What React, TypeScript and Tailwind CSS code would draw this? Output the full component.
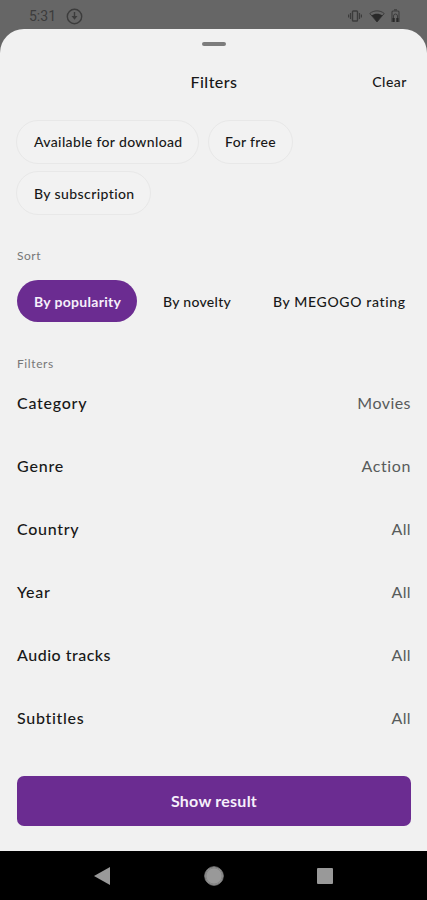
import React from "react";

const filters = [
  { name: "Category", value: "Movies", nameTracking: "tracking-[0.75px]", valueTracking: "tracking-[0.45px]" },
  { name: "Genre", value: "Action", nameTracking: "tracking-[0.8px]", valueTracking: "tracking-[0.6px]" },
  { name: "Country", value: "All", nameTracking: "tracking-[0.7px]", valueTracking: "tracking-[0.4px]" },
  { name: "Year", value: "All", nameTracking: "tracking-[0.7px]", valueTracking: "tracking-[0.4px]" },
  { name: "Audio tracks", value: "All", nameTracking: "tracking-[0.5px]", valueTracking: "tracking-[0.4px]" },
  { name: "Subtitles", value: "All", nameTracking: "tracking-[0.7px]", valueTracking: "tracking-[0.4px]" },
];

function StatusBar() {
  return (
    <header className="flex h-8 items-center justify-between pl-[29px] pr-[26px] text-[#3c3c3c]">
      <div className="flex items-center gap-[10px]">
        <span className="font-['Roboto',sans-serif] text-[14px] leading-4 font-normal">5:31</span>
        <svg width="17" height="17" viewBox="0 0 17 17" fill="none" stroke="currentColor" strokeWidth="1.4">
          <circle cx="8.5" cy="8.5" r="7.2" />
          <path d="M8.5 4v5" />
          <path d="M5.5 8h6l-3 3.8z" fill="currentColor" stroke="none" />
        </svg>
      </div>
      <div className="flex items-center">
        <svg width="14" height="12" viewBox="0 0 14 12" fill="none" stroke="currentColor">
          <rect x="4.5" y="1" width="5" height="10" rx=".8" strokeWidth="1.4" />
          <path d="M2.5 3v6M11.5 3v6M.6 4.500v3M13.4 4.500v3" strokeWidth="1.2" />
        </svg>
        <svg className="ml-[7px]" width="16" height="13" viewBox="0 0 16 13">
          <path d="M8 12 .8 3.500C4.800 0 11.200 0 15.200 3.500z" fill="none" stroke="currentColor" strokeWidth="1" />
          <path d="M8 12 2.700 5.400C5.500 3.200 10.500 3.200 13.300 5.400z" fill="#292929" />
        </svg>
        <svg className="ml-[6px] mr-px" width="9" height="14" viewBox="0 0 9 14" fill="none" stroke="currentColor">
          <path d="M3 .8h3M1 13V3Q1 2 2 2h5q1 0 1 1v10" strokeWidth="1.1" />
          <path d="M2.500 10V7q0-2 2-2t2 2v3" strokeWidth="1" />
          <path d="M1.500 9h2.200v4H1.500zM5.300 9h2.200v4H5.300z" fill="#292929" stroke="none" />
        </svg>
      </div>
    </header>
  );
}

function Chip({ children, className }: { children: React.ReactNode; className: string }) {
  return (
    <button className={`flex h-11 items-center rounded-full border border-[#e8e8e8] bg-[#f2f2f2] text-[14px] whitespace-nowrap ${className}`}>
      {children}
    </button>
  );
}

export default function App() {
  return (
    <div className="h-[900px] w-[427px] overflow-hidden bg-[#666] font-['Lato',sans-serif] font-medium text-[#181818]">
      <StatusBar />
      <main className="-mt-[3px] flex h-[822px] flex-col rounded-t-[24px] bg-[#f1f1f1] pl-[17px] pr-4">
        <div className="mt-[13px] h-1 w-6 self-center rounded-full bg-[#7c7c7c]" />
        <div className="mt-[24px] grid h-6 grid-cols-[1fr_auto_1fr] items-center">
          <h1 className="col-start-2 text-[16px] tracking-[0.45px]">Filters</h1>
          <button className="-mt-0.5 justify-self-end pr-[4px] text-[14px] tracking-[0.5px]">Clear</button>
        </div>
        <div className="-ml-px mt-[26px] flex flex-wrap gap-x-[9px] gap-y-[7px]">
          <Chip className="w-[183px] pb-px pl-[17px] tracking-[0.35px]">Available for download</Chip>
          <Chip className="w-[85px] pb-px pl-[16px] tracking-[0.35px]">For free</Chip>
          <Chip className="w-[135px] pl-[17px] tracking-[0.4px]">By subscription</Chip>
        </div>
        <h2 className="mt-[33px] text-[12px] leading-4 font-normal tracking-[0.5px] text-[#777]">Sort</h2>
        <div className="mt-[16px] flex h-[42px] items-center text-[14px] whitespace-nowrap">
          <button className="h-full w-[120px] rounded-full bg-[#6b2c91] pl-[17px] text-left font-bold tracking-[0.3px] text-[#f6effb]">By popularity</button>
          <button className="ml-[26px] w-[110px] text-left tracking-[0.3px]">By novelty</button>
          <button className="tracking-[0.65px]">By MEGOGO rating</button>
        </div>
        <h2 className="mt-[34px] text-[12px] leading-4 font-normal tracking-[0.6px] text-[#777]">Filters</h2>
        <div className="-mt-px">
          {filters.map((f) => (
            <div key={f.name} className="flex h-[63px] items-center justify-between text-[16px]">
              <span className={f.nameTracking}>{f.name}</span>
              <span className={`font-normal text-[#585b5b] ${f.valueTracking}`}>{f.value}</span>
            </div>
          ))}
        </div>
        <button className="mt-[27px] h-[50px] shrink-0 rounded-[7px] bg-[#6b2c91] text-[16px] font-bold tracking-[0.25px] text-[#f6effb]">Show result</button>
      </main>
      <nav className="flex h-[49px] items-center bg-black pl-[94px]">
        <svg width="16" height="18" viewBox="0 0 16 18" fill="#999"><path d="M0 9 16 0v18z" /></svg>
        <svg className="ml-[94px]" width="20" height="20" viewBox="0 0 20 20"><circle cx="10" cy="10" r="9.300" fill="#999" stroke="#777" /><circle cx="10" cy="10" r="8" fill="none" stroke="#777" strokeWidth=".6" /></svg>
        <div className="ml-[93px] h-4 w-4 rounded-[1px] bg-[#999]" />
      </nav>
    </div>
  );
}
